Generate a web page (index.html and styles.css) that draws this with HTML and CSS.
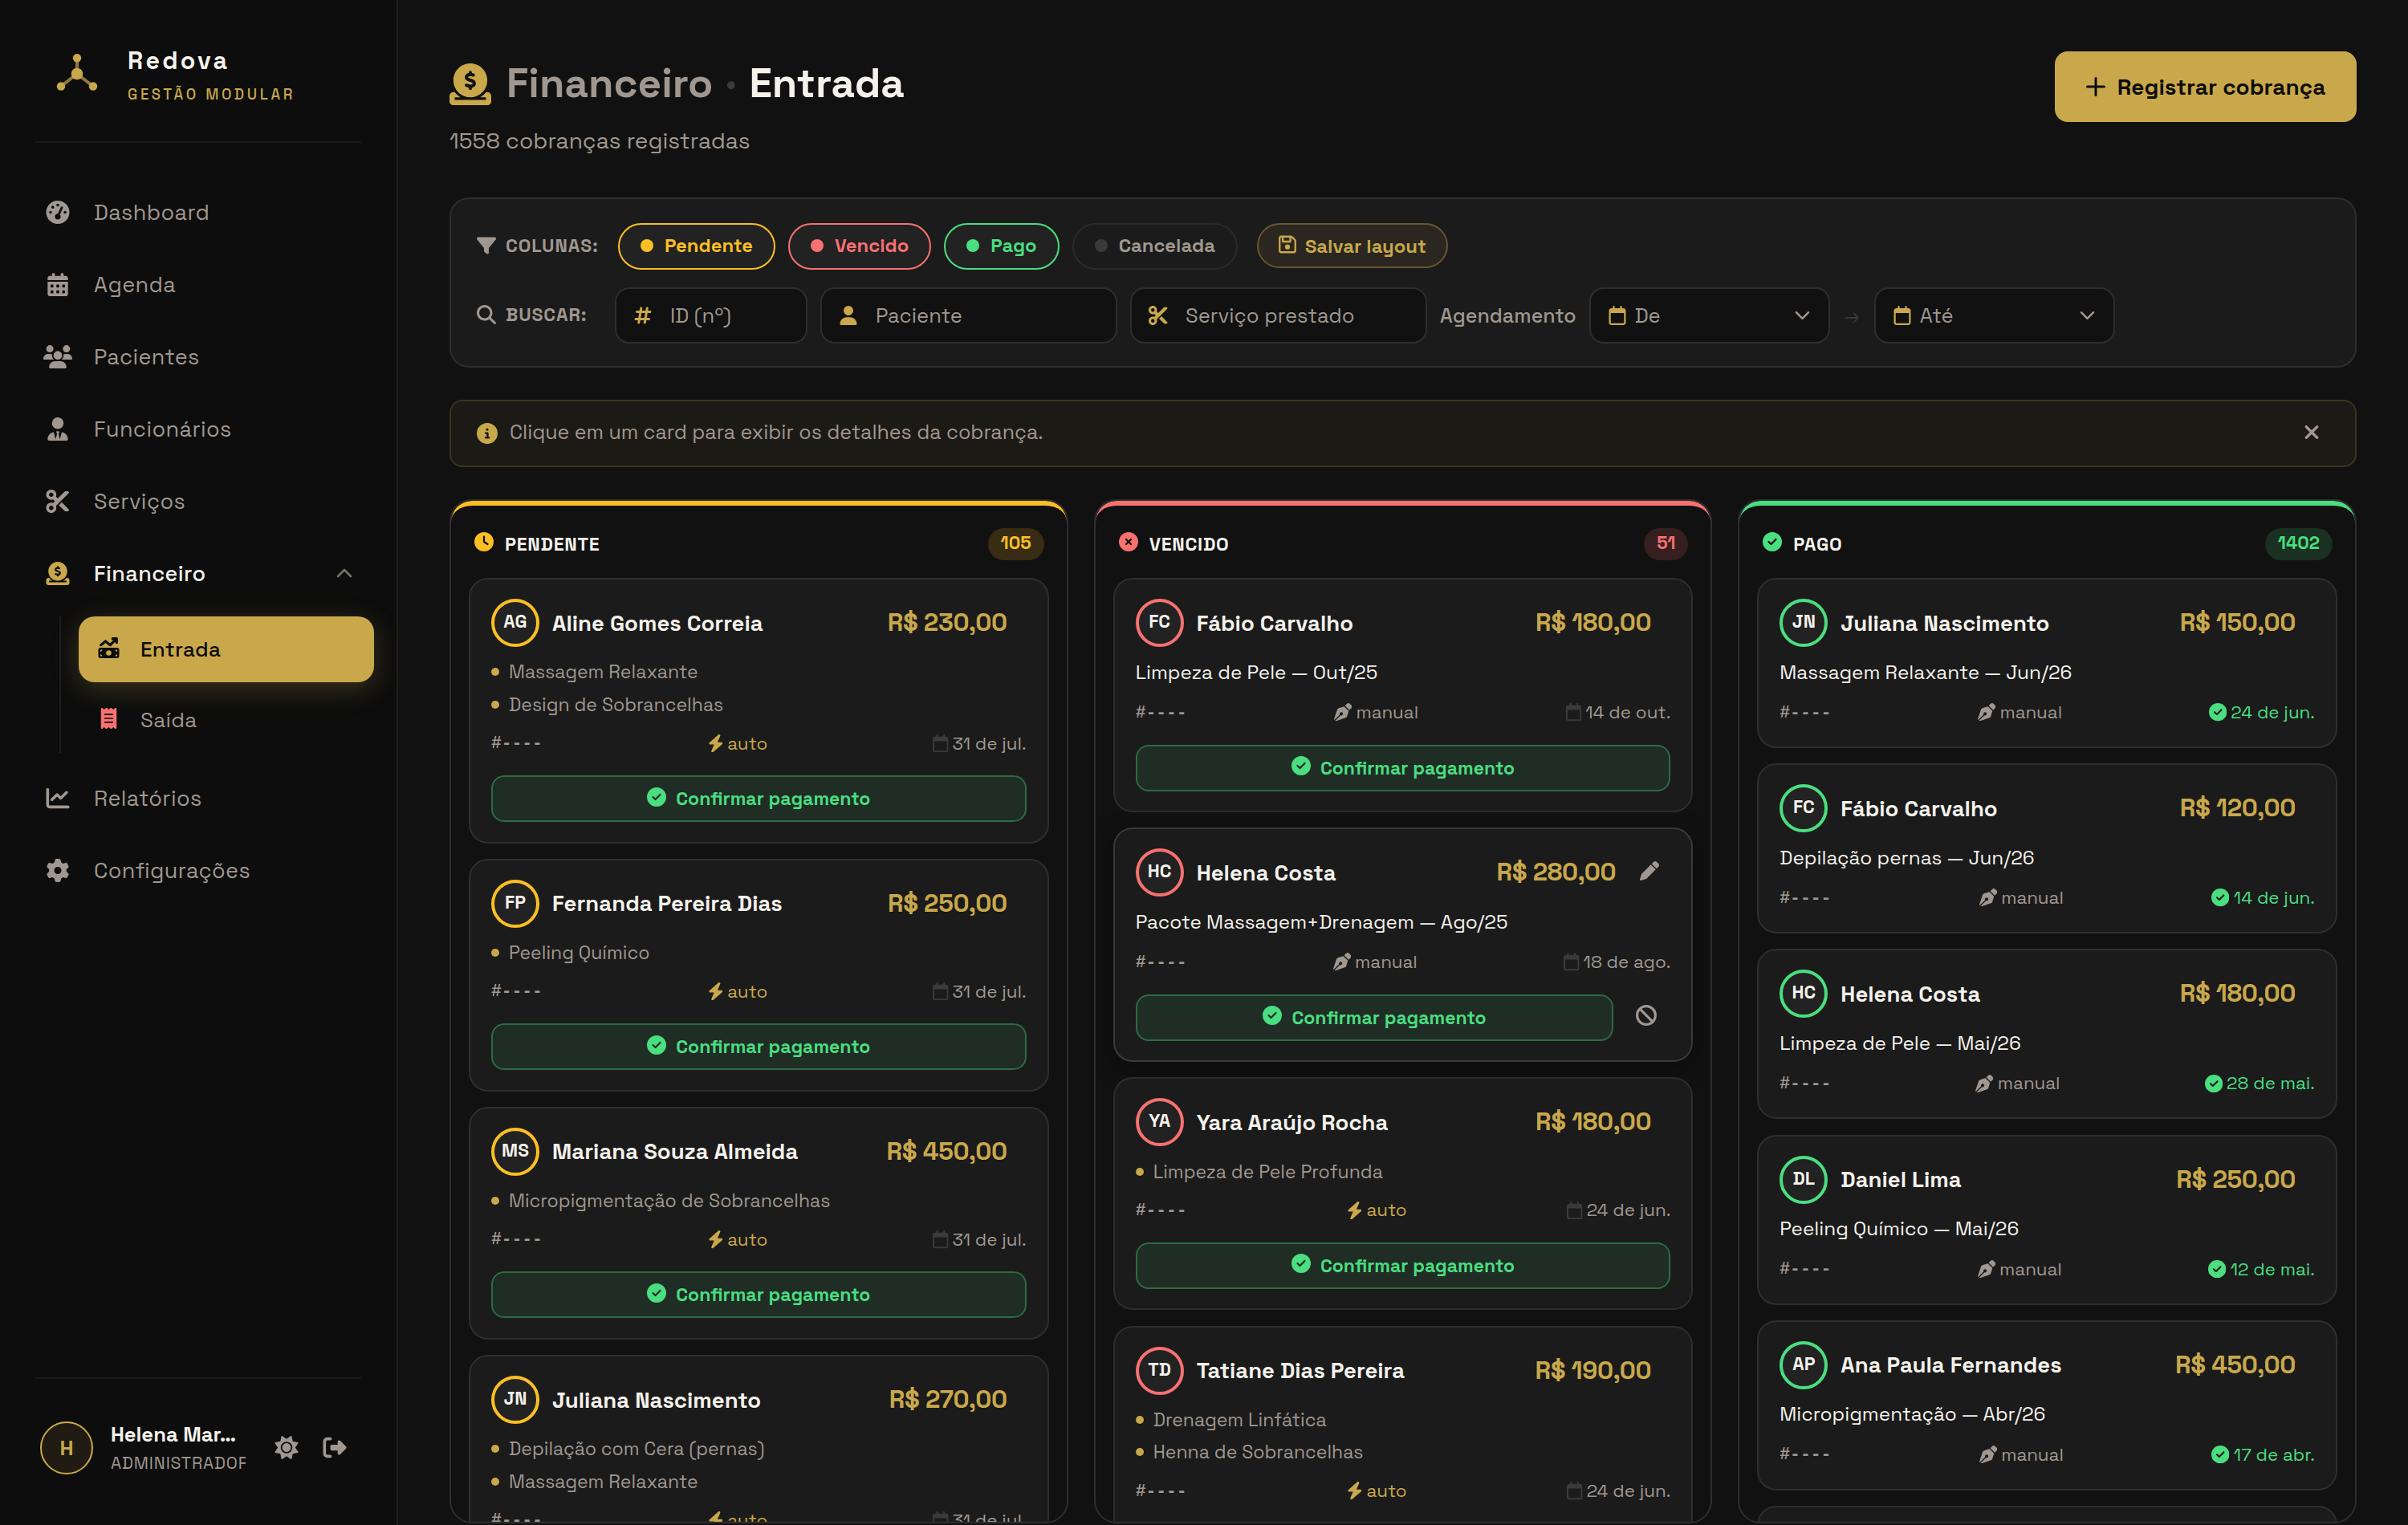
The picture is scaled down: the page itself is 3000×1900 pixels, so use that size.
FILE: index.html
```html
<!DOCTYPE html>
<html lang="pt-br">
<head>
  <meta charset="UTF-8" />
  <meta name="viewport" content="width=device-width, initial-scale=1.0"/>
  <title>Redova - Financeiro</title>
  <link rel="stylesheet" href="styles.css">
</head>
<body>
  <!-- Icons -->
  <svg class="sprite" xmlns="http://www.w3.org/2000/svg">
    <symbol id="i-gauge" viewBox="0 0 512 512"><path d="M0 256a256 256 0 1 1 512 0A256 256 0 1 1 0 256zM288 96a32 32 0 1 0 -64 0 32 32 0 1 0 64 0zM256 416c35.3 0 64-28.7 64-64c0-17.4-6.9-33.1-18.1-44.6L366 161.7c5.3-12.1-.2-26.3-12.3-31.6s-26.3 .2-31.6 12.3L257.9 288c-.6 0-1.3 0-1.9 0c-35.3 0-64 28.7-64 64s28.7 64 64 64zM176 144a32 32 0 1 0 -64 0 32 32 0 1 0 64 0zM96 288a32 32 0 1 0 0-64 32 32 0 1 0 0 64zm352-32a32 32 0 1 0 -64 0 32 32 0 1 0 64 0z"/></symbol>
    <symbol id="i-days" viewBox="0 0 448 512"><path d="M128 0c17.7 0 32 14.3 32 32l0 32 128 0 0-32c0-17.7 14.3-32 32-32s32 14.3 32 32l0 32 48 0c26.5 0 48 21.5 48 48l0 48L0 160l0-48C0 85.5 21.5 64 48 64l48 0 0-32c0-17.7 14.3-32 32-32zM0 192l448 0 0 272c0 26.5-21.5 48-48 48L48 512c-26.5 0-48-21.5-48-48L0 192zm64 80l0 32c0 8.8 7.2 16 16 16l32 0c8.8 0 16-7.2 16-16l0-32c0-8.8-7.2-16-16-16l-32 0c-8.8 0-16 7.2-16 16zm128 0l0 32c0 8.8 7.2 16 16 16l32 0c8.8 0 16-7.2 16-16l0-32c0-8.8-7.2-16-16-16l-32 0c-8.8 0-16 7.2-16 16zm144-16c-8.8 0-16 7.2-16 16l0 32c0 8.8 7.2 16 16 16l32 0c8.8 0 16-7.2 16-16l0-32c0-8.8-7.2-16-16-16l-32 0zM64 400l0 32c0 8.8 7.2 16 16 16l32 0c8.8 0 16-7.2 16-16l0-32c0-8.8-7.2-16-16-16l-32 0c-8.8 0-16 7.2-16 16zm144-16c-8.8 0-16 7.2-16 16l0 32c0 8.8 7.2 16 16 16l32 0c8.8 0 16-7.2 16-16l0-32c0-8.8-7.2-16-16-16l-32 0zm112 16l0 32c0 8.8 7.2 16 16 16l32 0c8.8 0 16-7.2 16-16l0-32c0-8.8-7.2-16-16-16l-32 0c-8.8 0-16 7.2-16 16z"/></symbol>
    <symbol id="i-users" viewBox="0 0 640 512"><path d="M144 0a80 80 0 1 1 0 160A80 80 0 1 1 144 0zM512 0a80 80 0 1 1 0 160A80 80 0 1 1 512 0zM0 298.7C0 239.8 47.8 192 106.7 192l42.7 0c15.9 0 31 3.5 44.6 9.7c-1.3 7.2-1.9 14.7-1.9 22.3c0 38.2 16.8 72.5 43.3 96c-.2 0-.4 0-.7 0L21.3 320C9.6 320 0 310.4 0 298.7zM405.3 320c-.2 0-.4 0-.7 0c26.6-23.5 43.3-57.8 43.3-96c0-7.6-.7-15-1.9-22.3c13.6-6.3 28.7-9.7 44.6-9.7l42.7 0C592.2 192 640 239.8 640 298.7c0 11.8-9.6 21.3-21.3 21.3l-213.3 0zM224 224a96 96 0 1 1 192 0 96 96 0 1 1 -192 0zM128 485.3C128 411.7 187.7 352 261.3 352l117.3 0C452.3 352 512 411.7 512 485.3c0 14.7-11.9 26.7-26.7 26.7l-330.7 0c-14.7 0-26.7-11.9-26.7-26.7z"/></symbol>
    <symbol id="i-tie" viewBox="0 0 448 512"><path d="M96 128a128 128 0 1 0 256 0A128 128 0 1 0 96 128zm94.5 200.2l18.6 31L175.8 483.1l-36-146.9c-2-8.1-9.8-13.4-17.9-11.3C51.9 342.4 0 405.8 0 481.3c0 17 13.8 30.7 30.7 30.7l131.7 0 5.6 0 112 0 5.6 0 131.7 0c17 0 30.7-13.8 30.7-30.7c0-75.5-51.9-138.9-121.9-156.4c-8.1-2-15.9 3.3-17.9 11.3l-36 146.9L238.9 359.2l18.6-31c6.4-10.7-1.3-24.2-13.7-24.2L224 304l-19.7 0c-12.4 0-20.1 13.6-13.7 24.2z"/></symbol>
    <symbol id="i-scissors" viewBox="0 0 512 512"><path d="M256 192l-39.5-39.5c4.9-12.6 7.5-26.2 7.5-40.5C224 50.1 173.9 0 112 0S0 50.1 0 112s50.1 112 112 112c14.3 0 27.9-2.7 40.5-7.5L192 256l-39.5 39.5c-12.6-4.9-26.2-7.5-40.5-7.5C50.1 288 0 338.1 0 400s50.1 112 112 112s112-50.1 112-112c0-14.3-2.7-27.9-7.5-40.5L499.2 76.8c7.1-7.1 7.1-18.5 0-25.6c-28.3-28.3-74.1-28.3-102.4 0L256 192zm22.6 150.6L396.8 460.8c28.3 28.3 74.1 28.3 102.4 0c7.1-7.1 7.1-18.5 0-25.6L342.6 278.6l-64 64zM64 112a48 48 0 1 1 96 0 48 48 0 1 1 -96 0zm48 240a48 48 0 1 1 0 96 48 48 0 1 1 0-96z"/></symbol>
    <symbol id="i-donate" viewBox="0 0 512 512"><path d="M326.7 403.7c-22.1 8-45.9 12.3-70.7 12.3s-48.7-4.4-70.7-12.3l-.8-.3c-30-11-56.8-28.7-78.6-51.4C70 314.6 48 263.9 48 208C48 93.1 141.1 0 256 0S464 93.1 464 208c0 55.9-22 106.6-57.9 144c-1 1-2 2.1-3 3.1c-21.4 21.4-47.4 38.1-76.3 48.6zM256 91.9c-11.1 0-20.1 9-20.1 20.1l0 6c-5.6 1.2-10.9 2.9-15.9 5.1c-15 6.8-27.9 19.4-31.1 37.7c-1.8 10.2-.8 20 3.4 29c4.2 8.8 10.7 15 17.3 19.5c11.6 7.9 26.9 12.5 38.6 16l2.2 .7c13.9 4.2 23.4 7.4 29.3 11.7c2.5 1.8 3.4 3.2 3.7 4c.3 .8 .9 2.6 .2 6.7c-.6 3.5-2.5 6.4-8 8.8c-6.1 2.6-16 3.9-28.8 1.9c-6-1-16.7-4.6-26.2-7.9c-2.2-.7-4.3-1.5-6.4-2.1c-10.5-3.5-21.8 2.2-25.3 12.7s2.2 21.8 12.7 25.3c1.2 .4 2.7 .9 4.4 1.5c7.9 2.7 20.3 6.9 29.8 9.1l0 6.4c0 11.1 9 20.1 20.1 20.1s20.1-9 20.1-20.1l0-5.5c5.3-1 10.5-2.5 15.4-4.6c15.7-6.7 28.4-19.7 31.6-38.7c1.8-10.4 1-20.3-3-29.4c-3.9-9-10.2-15.6-16.9-20.5c-12.2-8.8-28.3-13.7-40.4-17.4l-.8-.2c-14.2-4.3-23.8-7.3-29.9-11.4c-2.6-1.8-3.4-3-3.6-3.5c-.2-.3-.7-1.6-.1-5c.3-1.9 1.9-5.2 8.2-8.1c6.4-2.9 16.4-4.5 28.6-2.6c4.3 .7 17.9 3.3 21.7 4.3c10.7 2.8 21.6-3.5 24.5-14.2s-3.5-21.6-14.2-24.5c-4.4-1.2-14.4-3.2-21-4.4l0-6.3c0-11.1-9-20.1-20.1-20.1zM48 352l16 0c19.5 25.9 44 47.7 72.2 64L64 416l0 32 192 0 192 0 0-32-72.2 0c28.2-16.3 52.8-38.1 72.2-64l16 0c26.5 0 48 21.5 48 48l0 64c0 26.5-21.5 48-48 48L48 512c-26.5 0-48-21.5-48-48l0-64c0-26.5 21.5-48 48-48z"/></symbol>
    <symbol id="i-trend" viewBox="0 0 512 512"><path d="M470.7 9.4c3 3.1 5.3 6.6 6.9 10.3s2.4 7.8 2.4 12.2v96.1c0 17.7-14.3 32-32 32s-32-14.3-32-32V109.3L310.6 214.6c-11.8 11.8-30.8 12.6-43.5 1.7L176 138.1 84.8 216.3c-13.4 11.5-33.6 9.9-45.1-3.5s-9.9-33.6 3.5-45.1l112-96c12-10.3 29.7-10.3 41.7 0l89.5 76.7L370.7 64H352c-17.7 0-32-14.3-32-32s14.3-32 32-32h96c8.8 0 16.8 3.6 22.6 9.3l.1 .1zM0 304c0-26.5 21.5-48 48-48H464c26.5 0 48 21.5 48 48V464c0 26.5-21.5 48-48 48H48c-26.5 0-48-21.5-48-48V304zM48 416v48H96c0-26.5-21.5-48-48-48zM96 304H48v48c26.5 0 48-21.5 48-48zM464 416c-26.5 0-48 21.5-48 48h48V416zM416 304c0 26.5 21.5 48 48 48V304H416zm-96 80a64 64 0 1 0 -128 0 64 64 0 1 0 128 0z"/></symbol>
    <symbol id="i-receipt" viewBox="0 0 384 512"><path d="M14 2.2C22.5-1.7 32.5-.3 39.6 5.8L80 40.4 120.4 5.8c9-7.7 22.3-7.7 31.2 0L192 40.4 232.4 5.8c9-7.7 22.3-7.7 31.2 0L304 40.4 344.4 5.8c7.1-6.1 17.1-7.5 25.6-3.6s14 12.4 14 21.8V488c0 9.4-5.5 17.9-14 21.8s-18.5 2.5-25.6-3.6L304 471.6l-40.4 34.6c-9 7.7-22.3 7.7-31.2 0L192 471.6l-40.4 34.6c-9 7.7-22.3 7.7-31.2 0L80 471.6 39.6 506.2c-7.1 6.1-17.1 7.5-25.6 3.6S0 497.4 0 488V24C0 14.6 5.5 6.1 14 2.2zM96 144c-8.8 0-16 7.2-16 16s7.2 16 16 16H288c8.8 0 16-7.2 16-16s-7.2-16-16-16H96zM80 352c0 8.8 7.2 16 16 16H288c8.8 0 16-7.2 16-16s-7.2-16-16-16H96c-8.8 0-16 7.2-16 16zM96 240c-8.8 0-16 7.2-16 16s7.2 16 16 16H288c8.8 0 16-7.2 16-16s-7.2-16-16-16H96z"/></symbol>
    <symbol id="i-chart" viewBox="0 0 512 512"><path d="M64 64c0-17.7-14.3-32-32-32S0 46.3 0 64V400c0 44.2 35.8 80 80 80H480c17.7 0 32-14.3 32-32s-14.3-32-32-32H80c-8.8 0-16-7.2-16-16V64zm406.6 86.6c12.5-12.5 12.5-32.8 0-45.3s-32.8-12.5-45.3 0L320 210.7l-57.4-57.4c-12.5-12.5-32.8-12.5-45.3 0l-112 112c-12.5 12.5-12.5 32.8 0 45.3s32.8 12.5 45.3 0L240 221.3l57.4 57.4c12.5 12.5 32.8 12.5 45.3 0l128-128z"/></symbol>
    <symbol id="i-gear" viewBox="0 0 512 512"><path d="M495.9 166.6c3.2 8.7 .5 18.4-6.4 24.6l-43.3 39.4c1.1 8.3 1.7 16.8 1.7 25.4s-.6 17.1-1.7 25.4l43.3 39.4c6.9 6.2 9.6 15.9 6.4 24.6c-4.4 11.9-9.7 23.3-15.8 34.3l-4.7 8.1c-6.6 11-14 21.4-22.1 31.2c-5.9 7.2-15.7 9.6-24.5 6.8l-55.7-17.7c-13.4 10.3-28.2 18.9-44 25.4l-12.5 57.1c-2 9.1-9 16.3-18.2 17.8c-13.8 2.3-28 3.5-42.5 3.5s-28.7-1.2-42.5-3.5c-9.2-1.5-16.2-8.7-18.2-17.8l-12.5-57.1c-15.8-6.5-30.6-15.1-44-25.4L83.1 425.9c-8.8 2.8-18.6 .3-24.5-6.8c-8.1-9.8-15.5-20.2-22.1-31.2l-4.7-8.1c-6.1-11-11.4-22.4-15.8-34.3c-3.2-8.7-.5-18.4 6.4-24.6l43.3-39.4C64.6 273.1 64 264.6 64 256s.6-17.1 1.7-25.4L22.4 191.2c-6.9-6.2-9.6-15.9-6.4-24.6c4.4-11.9 9.7-23.3 15.8-34.3l4.7-8.1c6.6-11 14-21.4 22.1-31.2c5.9-7.2 15.7-9.6 24.5-6.8l55.7 17.7c13.4-10.3 28.2-18.9 44-25.4l12.5-57.1c2-9.1 9-16.3 18.2-17.8C227.3 1.2 241.5 0 256 0s28.7 1.2 42.5 3.5c9.2 1.5 16.2 8.7 18.2 17.8l12.5 57.1c15.8 6.5 30.6 15.1 44 25.4l55.7-17.7c8.8-2.8 18.6-.3 24.5 6.8c8.1 9.8 15.5 20.2 22.1 31.2l4.7 8.1c6.1 11 11.4 22.4 15.8 34.3zM256 336a80 80 0 1 0 0-160 80 80 0 1 0 0 160z"/></symbol>
    <symbol id="i-sun" viewBox="0 0 512 512"><path d="M361.5 1.2c5 2.1 8.6 6.6 9.6 11.9L391 121l107.9 19.8c5.3 1 9.8 4.6 11.9 9.6s1.5 10.7-1.6 15.2L446.9 256l62.3 90.3c3.1 4.5 3.7 10.2 1.6 15.2s-6.6 8.6-11.9 9.6L391 391 371.1 498.9c-1 5.3-4.6 9.8-9.6 11.9s-10.7 1.5-15.2-1.6L256 446.9l-90.3 62.3c-4.5 3.1-10.2 3.7-15.2 1.6s-8.6-6.6-9.6-11.9L121 391 13.1 371.1c-5.3-1-9.8-4.6-11.9-9.6s-1.5-10.7 1.6-15.2L65.1 256 2.8 165.7c-3.1-4.5-3.7-10.2-1.6-15.2s6.6-8.6 11.9-9.6L121 121 140.9 13.1c1-5.3 4.6-9.8 9.6-11.9s10.7-1.5 15.2 1.6L256 65.1 346.3 2.8c4.5-3.1 10.2-3.7 15.2-1.6zM160 256a96 96 0 1 1 192 0 96 96 0 1 1 -192 0zm224 0a128 128 0 1 0 -256 0 128 128 0 1 0 256 0z"/></symbol>
    <symbol id="i-logout" viewBox="0 0 512 512"><path d="M377.9 105.9L500.7 228.7c7.2 7.2 11.3 17.1 11.3 27.3s-4.1 20.1-11.3 27.3L377.9 406.1c-6.4 6.4-15 9.9-24 9.9c-18.7 0-33.9-15.2-33.9-33.9l0-62.1-128 0c-17.7 0-32-14.3-32-32l0-64c0-17.7 14.3-32 32-32l128 0 0-62.1c0-18.7 15.2-33.9 33.9-33.9c9 0 17.6 3.6 24 9.9zM160 96L96 96c-17.7 0-32 14.3-32 32l0 256c0 17.7 14.3 32 32 32l64 0c17.7 0 32 14.3 32 32s-14.3 32-32 32l-64 0c-53 0-96-43-96-96L0 128C0 75 43 32 96 32l64 0c17.7 0 32 14.3 32 32s-14.3 32-32 32z"/></symbol>
    <symbol id="i-filter" viewBox="0 0 512 512"><path d="M3.9 54.9C10.5 40.9 24.5 32 40 32l432 0c15.5 0 29.5 8.9 36.1 22.9s4.6 30.5-5.2 42.5L320 320.9 320 448c0 12.1-6.8 23.2-17.7 28.6s-23.8 4.3-33.5-3l-64-48c-8.1-6-12.8-15.5-12.8-25.6l0-79.1L9 97.3C-.7 85.4-2.8 68.8 3.9 54.9z"/></symbol>
    <symbol id="i-search" viewBox="0 0 512 512"><path d="M416 208c0 45.9-14.9 88.3-40 122.7L502.6 457.4c12.5 12.5 12.5 32.8 0 45.3s-32.8 12.5-45.3 0L330.7 376c-34.4 25.2-76.8 40-122.7 40C93.1 416 0 322.9 0 208S93.1 0 208 0S416 93.1 416 208zM208 352a144 144 0 1 0 0-288 144 144 0 1 0 0 288z"/></symbol>
    <symbol id="i-save" viewBox="0 0 448 512"><path d="M48 96V416c0 8.8 7.2 16 16 16H384c8.8 0 16-7.2 16-16V170.5c0-4.2-1.7-8.3-4.7-11.3l33.9-33.9c12 12 18.7 28.3 18.7 45.3V416c0 35.3-28.7 64-64 64H64c-35.3 0-64-28.7-64-64V96C0 60.7 28.7 32 64 32H309.5c17 0 33.3 6.7 45.3 18.7l74.5 74.5-33.9 33.9L320.8 84.7c-.3-.3-.5-.5-.8-.8V184c0 13.3-10.7 24-24 24H104c-13.3 0-24-10.7-24-24V80H64c-8.8 0-16 7.2-16 16zm80-16v80H272V80H128zm32 240a64 64 0 1 1 128 0 64 64 0 1 1 -128 0z"/></symbol>
    <symbol id="i-hash" viewBox="0 0 448 512"><path d="M181.3 32.4c17.4 2.9 29.2 19.4 26.3 36.8L197.8 128l95.1 0 11.5-69.3c2.9-17.4 19.4-29.2 36.8-26.3s29.2 19.4 26.3 36.8L357.8 128l58.2 0c17.7 0 32 14.3 32 32s-14.3 32-32 32l-68.9 0L325.8 320l58.2 0c17.7 0 32 14.3 32 32s-14.3 32-32 32l-68.9 0-11.5 69.3c-2.9 17.4-19.4 29.2-36.8 26.3s-29.2-19.4-26.3-36.8l9.8-58.7-95.1 0-11.5 69.3c-2.9 17.4-19.4 29.2-36.8 26.3s-29.2-19.4-26.3-36.8L90.2 384 32 384c-17.7 0-32-14.3-32-32s14.3-32 32-32l68.9 0 21.3-128L64 192c-17.7 0-32-14.3-32-32s14.3-32 32-32l68.9 0 11.5-69.3c2.9-17.4 19.4-29.2 36.8-26.3zM187.1 192L165.8 320l95.1 0 21.3-128-95.1 0z"/></symbol>
    <symbol id="i-user" viewBox="0 0 448 512"><path d="M224 256A128 128 0 1 0 224 0a128 128 0 1 0 0 256zm-45.7 48C79.8 304 0 383.8 0 482.3C0 498.7 13.3 512 29.7 512l388.6 0c16.4 0 29.7-13.3 29.7-29.7C448 383.8 368.2 304 269.7 304l-91.4 0z"/></symbol>
    <symbol id="i-calendar" viewBox="0 0 448 512"><path d="M152 24c0-13.3-10.7-24-24-24s-24 10.7-24 24l0 40L64 64C28.7 64 0 92.7 0 128l0 320c0 35.3 28.7 64 64 64l320 0c35.3 0 64-28.7 64-64l0-320c0-35.3-28.7-64-64-64l-40 0 0-40c0-13.3-10.7-24-24-24s-24 10.7-24 24l0 40L152 64l0-40zM48 192l352 0 0 256c0 8.8-7.2 16-16 16L64 464c-8.8 0-16-7.2-16-16l0-256z"/></symbol>
    <symbol id="i-info" viewBox="0 0 512 512"><path d="M256 512A256 256 0 1 0 256 0a256 256 0 1 0 0 512zM216 336l24 0 0-64-24 0c-13.3 0-24-10.7-24-24s10.7-24 24-24l48 0c13.3 0 24 10.7 24 24l0 88 8 0c13.3 0 24 10.7 24 24s-10.7 24-24 24l-80 0c-13.3 0-24-10.7-24-24s10.7-24 24-24zm40-208a32 32 0 1 1 0 64 32 32 0 1 1 0-64z"/></symbol>
    <symbol id="i-check" viewBox="0 0 512 512"><path d="M256 512A256 256 0 1 0 256 0a256 256 0 1 0 0 512zM369 209L241 337c-9.4 9.4-24.6 9.4-33.9 0l-64-64c-9.4-9.4-9.4-24.6 0-33.9s24.6-9.4 33.9 0l47 47L335 175c9.4-9.4 24.6-9.4 33.9 0s9.4 24.6 0 33.9z"/></symbol>
    <symbol id="i-cross" viewBox="0 0 512 512"><path d="M256 512A256 256 0 1 0 256 0a256 256 0 1 0 0 512zM175 175c9.4-9.4 24.6-9.4 33.9 0l47 47 47-47c9.4-9.4 24.6-9.4 33.9 0s9.4 24.6 0 33.9l-47 47 47 47c9.4 9.4 9.4 24.6 0 33.9s-24.6 9.4-33.9 0l-47-47-47 47c-9.4 9.4-24.6 9.4-33.9 0s-9.4-24.6 0-33.9l47-47-47-47c-9.4-9.4-9.4-24.6 0-33.9z"/></symbol>
    <symbol id="i-clock" viewBox="0 0 512 512"><path d="M256 0a256 256 0 1 1 0 512A256 256 0 1 1 256 0zM232 120l0 136c0 8 4 15.5 10.7 20l96 64c11 7.4 25.9 4.4 33.3-6.7s4.4-25.9-6.7-33.3L280 243.2 280 120c0-13.3-10.7-24-24-24s-24 10.7-24 24z"/></symbol>
    <symbol id="i-bolt" viewBox="0 0 448 512"><path d="M349.4 44.6c5.9-13.7 1.5-29.7-10.6-38.5s-28.6-8-39.9 1.8l-256 224c-10 8.8-13.6 22.9-8.9 35.3S50.7 288 64 288l111.5 0L98.6 467.4c-5.9 13.7-1.5 29.7 10.6 38.5s28.6 8 39.9-1.8l256-224c10-8.8 13.6-22.9 8.9-35.3s-16.6-20.7-30-20.7l-111.5 0L349.4 44.6z"/></symbol>
    <symbol id="i-nib" viewBox="0 0 512 512"><path d="M368.4 18.3L312.7 74.1 437.9 199.3l55.7-55.7c21.9-21.9 21.9-57.3 0-79.2L447.6 18.3c-21.9-21.9-57.3-21.9-79.2 0zM288 94.6l-9.2 2.8L134.7 140.6c-19.9 6-35.7 21.2-42.3 41L3.8 445.8c-3.8 11.3-1 23.9 7.3 32.4L164.7 324.7c-3-6.3-4.7-13.3-4.7-20.7c0-26.5 21.5-48 48-48s48 21.5 48 48s-21.5 48-48 48c-7.4 0-14.4-1.7-20.7-4.7L33.7 500.9c8.6 8.3 21.1 11.2 32.4 7.3l264.3-88.6c19.7-6.6 35-22.4 41-42.3l43.2-144.1 2.7-9.2L288 94.6z"/></symbol>
    <symbol id="i-pen" viewBox="0 0 512 512"><path d="M362.7 19.3L314.3 67.7 444.3 197.7l48.4-48.4c25-25 25-65.5 0-90.5L453.3 19.3c-25-25-65.5-25-90.5 0zm-71 71L58.6 323.5c-10.4 10.4-18 23.3-22.2 37.4L1 481.2C-1.5 489.7 .8 498.8 7 505s15.3 8.5 23.7 6.1l120.3-35.4c14.1-4.2 27-11.8 37.4-22.2L421.7 220.3 291.7 90.3z"/></symbol>
    <symbol id="i-ban" viewBox="0 0 512 512"><path d="M367.2 412.5L99.5 144.8C77.1 176.1 64 214.5 64 256c0 106 86 192 192 192c41.5 0 79.9-13.1 111.2-35.5zm45.3-45.3C434.9 335.9 448 297.5 448 256c0-106-86-192-192-192c-41.5 0-79.9 13.1-111.2 35.5L412.5 367.2zM0 256a256 256 0 1 1 512 0A256 256 0 1 1 0 256z"/></symbol>
    <symbol id="i-xmark" viewBox="0 0 384 512"><path d="M342.6 150.6c12.5-12.5 12.5-32.8 0-45.3s-32.8-12.5-45.3 0L192 210.7 86.6 105.4c-12.5-12.5-32.8-12.5-45.3 0s-12.5 32.8 0 45.3L146.7 256 41.4 361.4c-12.5 12.5-12.5 32.8 0 45.3s32.8 12.5 45.3 0L192 301.3 297.4 406.6c12.5 12.5 32.8 12.5 45.3 0s12.5-32.8 0-45.3L237.3 256 342.6 150.6z"/></symbol>
    <symbol id="i-chevron" viewBox="0 0 20 12"><path d="M2 2l8 8 8-8" fill="none" stroke="currentColor" stroke-width="2.6" stroke-linecap="round" stroke-linejoin="round"/></symbol>
    <symbol id="i-plus" viewBox="0 0 24 24"><path d="M12 1.5v21M1.5 12h21" fill="none" stroke="currentColor" stroke-width="3" stroke-linecap="round"/></symbol>
  </svg>

  <aside class="sidebar">
    <div class="brand">
      <svg class="brand-logo" viewBox="0 0 52 46">
        <path d="M26 25V5M26 25L6 40.500M26 25L46 40.500" stroke="#907939" stroke-width="4" fill="none"/>
        <circle cx="26" cy="25" r="7.300"/><circle cx="26" cy="5.200" r="5.200"/><circle cx="6" cy="40.500" r="5.200"/><circle cx="46" cy="40.500" r="5.200"/>
      </svg>
      <div class="brand-text">
        <div class="brand-name">Redova</div>
        <div class="brand-sub">GESTÃO MODULAR</div>
      </div>
    </div>

    <nav class="nav">
      <a class="nav-item"><svg class="icon"><use href="#i-gauge"/></svg>Dashboard</a>
      <a class="nav-item"><svg class="icon"><use href="#i-days"/></svg>Agenda</a>
      <a class="nav-item"><svg class="icon wide"><use href="#i-users"/></svg>Pacientes</a>
      <a class="nav-item"><svg class="icon"><use href="#i-tie"/></svg>Funcionários</a>
      <a class="nav-item"><svg class="icon"><use href="#i-scissors"/></svg>Serviços</a>
      <a class="nav-item open"><svg class="icon"><use href="#i-donate"/></svg>Financeiro<svg class="caret"><use href="#i-chevron"/></svg></a>
      <div class="subnav">
        <a class="sub-item active"><svg class="icon"><use href="#i-trend"/></svg>Entrada</a>
        <a class="sub-item"><svg class="icon red"><use href="#i-receipt"/></svg>Saída</a>
      </div>
      <a class="nav-item"><svg class="icon"><use href="#i-chart"/></svg>Relatórios</a>
      <a class="nav-item"><svg class="icon"><use href="#i-gear"/></svg>Configurações</a>
    </nav>

    <div class="profile">
      <div class="profile-avatar">H</div>
      <div class="profile-text">
        <div class="profile-name">Helena Mar…</div>
        <div class="profile-role">ADMINISTRADOR</div>
      </div>
      <svg class="icon"><use href="#i-sun"/></svg>
      <svg class="icon"><use href="#i-logout"/></svg>
    </div>
  </aside>

  <main class="main">
    <header class="page-head">
      <div>
        <h1 class="title"><svg class="title-icon"><use href="#i-donate"/></svg><span class="crumb">Financeiro</span><span class="sep">·</span><span class="current">Entrada</span></h1>
        <p class="subtitle">1558 cobranças registradas</p>
      </div>
      <button class="btn-new"><svg><use href="#i-plus"/></svg>Registrar cobrança</button>
    </header>

    <section class="filters">
      <div class="filter-row">
        <div class="filter-label"><svg><use href="#i-filter"/></svg>COLUNAS:</div>
        <div class="pills">
          <span class="pill yellow">Pendente</span>
          <span class="pill red">Vencido</span>
          <span class="pill green">Pago</span>
          <span class="pill off">Cancelada</span>
          <button class="btn-save"><svg><use href="#i-save"/></svg>Salvar layout</button>
        </div>
      </div>
      <div class="filter-row search">
        <div class="filter-label"><svg><use href="#i-search"/></svg>BUSCAR:</div>
        <div class="field small"><svg><use href="#i-hash"/></svg>ID (nº)</div>
        <div class="field"><svg><use href="#i-user"/></svg>Paciente</div>
        <div class="field"><svg><use href="#i-scissors"/></svg>Serviço prestado</div>
        <span class="field-label">Agendamento</span>
        <div class="field date"><svg><use href="#i-calendar"/></svg>De<svg class="caret"><use href="#i-chevron"/></svg></div>
        <span class="arrow">→</span>
        <div class="field date"><svg><use href="#i-calendar"/></svg>Até<svg class="caret"><use href="#i-chevron"/></svg></div>
      </div>
    </section>

    <div class="hint">
      <svg class="hint-icon"><use href="#i-info"/></svg>
      <span class="hint-text">Clique em um card para exibir os detalhes da cobrança.</span>
      <svg class="hint-close"><use href="#i-xmark"/></svg>
    </div>

    <section class="board">
      <!-- Pendente -->
      <div class="column yellow">
        <div class="column-head"><svg><use href="#i-clock"/></svg><h2>PENDENTE</h2><span class="count">105</span></div>
        <div class="cards">
          <article class="card">
            <div class="card-head"><span class="avatar">AG</span><span class="name">Aline Gomes Correia</span><span class="price">R$ 230,00</span></div>
            <ul class="services"><li>Massagem Relaxante</li><li>Design de Sobrancelhas</li></ul>
            <div class="meta"><span class="code">#----</span><span class="auto"><svg><use href="#i-bolt"/></svg>auto</span><span class="date"><svg><use href="#i-calendar"/></svg>31 de jul.</span></div>
            <div class="actions"><button class="confirm"><svg><use href="#i-check"/></svg>Confirmar pagamento</button></div>
          </article>
          <article class="card">
            <div class="card-head"><span class="avatar">FP</span><span class="name">Fernanda Pereira Dias</span><span class="price">R$ 250,00</span></div>
            <ul class="services"><li>Peeling Químico</li></ul>
            <div class="meta"><span class="code">#----</span><span class="auto"><svg><use href="#i-bolt"/></svg>auto</span><span class="date"><svg><use href="#i-calendar"/></svg>31 de jul.</span></div>
            <div class="actions"><button class="confirm"><svg><use href="#i-check"/></svg>Confirmar pagamento</button></div>
          </article>
          <article class="card">
            <div class="card-head"><span class="avatar">MS</span><span class="name">Mariana Souza Almeida</span><span class="price">R$ 450,00</span></div>
            <ul class="services"><li>Micropigmentação de Sobrancelhas</li></ul>
            <div class="meta"><span class="code">#----</span><span class="auto"><svg><use href="#i-bolt"/></svg>auto</span><span class="date"><svg><use href="#i-calendar"/></svg>31 de jul.</span></div>
            <div class="actions"><button class="confirm"><svg><use href="#i-check"/></svg>Confirmar pagamento</button></div>
          </article>
          <article class="card">
            <div class="card-head"><span class="avatar">JN</span><span class="name">Juliana Nascimento</span><span class="price">R$ 270,00</span></div>
            <ul class="services"><li>Depilação com Cera (pernas)</li><li>Massagem Relaxante</li></ul>
            <div class="meta"><span class="code">#----</span><span class="auto"><svg><use href="#i-bolt"/></svg>auto</span><span class="date"><svg><use href="#i-calendar"/></svg>31 de jul.</span></div>
          </article>
        </div>
      </div>

      <!-- Vencido -->
      <div class="column red">
        <div class="column-head"><svg><use href="#i-cross"/></svg><h2>VENCIDO</h2><span class="count">51</span></div>
        <div class="cards">
          <article class="card">
            <div class="card-head"><span class="avatar">FC</span><span class="name">Fábio Carvalho</span><span class="price">R$ 180,00</span></div>
            <div class="service">Limpeza de Pele — Out/25</div>
            <div class="meta"><span class="code">#----</span><span class="manual"><svg><use href="#i-nib"/></svg>manual</span><span class="date"><svg><use href="#i-calendar"/></svg>14 de out.</span></div>
            <div class="actions"><button class="confirm"><svg><use href="#i-check"/></svg>Confirmar pagamento</button></div>
          </article>
          <article class="card hover">
            <div class="card-head"><span class="avatar">HC</span><span class="name">Helena Costa</span><span class="price">R$ 280,00</span><svg class="edit"><use href="#i-pen"/></svg></div>
            <div class="service">Pacote Massagem+Drenagem — Ago/25</div>
            <div class="meta"><span class="code">#----</span><span class="manual"><svg><use href="#i-nib"/></svg>manual</span><span class="date"><svg><use href="#i-calendar"/></svg>18 de ago.</span></div>
            <div class="actions"><button class="confirm"><svg><use href="#i-check"/></svg>Confirmar pagamento</button><span class="cancel"><svg><use href="#i-ban"/></svg></span></div>
          </article>
          <article class="card">
            <div class="card-head"><span class="avatar">YA</span><span class="name">Yara Araújo Rocha</span><span class="price">R$ 180,00</span></div>
            <ul class="services"><li>Limpeza de Pele Profunda</li></ul>
            <div class="meta"><span class="code">#----</span><span class="auto"><svg><use href="#i-bolt"/></svg>auto</span><span class="date"><svg><use href="#i-calendar"/></svg>24 de jun.</span></div>
            <div class="actions"><button class="confirm"><svg><use href="#i-check"/></svg>Confirmar pagamento</button></div>
          </article>
          <article class="card">
            <div class="card-head"><span class="avatar">TD</span><span class="name">Tatiane Dias Pereira</span><span class="price">R$ 190,00</span></div>
            <ul class="services"><li>Drenagem Linfática</li><li>Henna de Sobrancelhas</li></ul>
            <div class="meta"><span class="code">#----</span><span class="auto"><svg><use href="#i-bolt"/></svg>auto</span><span class="date"><svg><use href="#i-calendar"/></svg>24 de jun.</span></div>
            <div class="actions"><button class="confirm"></button></div>
          </article>
        </div>
      </div>

      <!-- Pago -->
      <div class="column green">
        <div class="column-head"><svg><use href="#i-check"/></svg><h2>PAGO</h2><span class="count">1402</span></div>
        <div class="cards">
          <article class="card">
            <div class="card-head"><span class="avatar">JN</span><span class="name">Juliana Nascimento</span><span class="price">R$ 150,00</span></div>
            <div class="service">Massagem Relaxante — Jun/26</div>
            <div class="meta"><span class="code">#----</span><span class="manual"><svg><use href="#i-nib"/></svg>manual</span><span class="paid"><svg><use href="#i-check"/></svg>24 de jun.</span></div>
          </article>
          <article class="card">
            <div class="card-head"><span class="avatar">FC</span><span class="name">Fábio Carvalho</span><span class="price">R$ 120,00</span></div>
            <div class="service">Depilação pernas — Jun/26</div>
            <div class="meta"><span class="code">#----</span><span class="manual"><svg><use href="#i-nib"/></svg>manual</span><span class="paid"><svg><use href="#i-check"/></svg>14 de jun.</span></div>
          </article>
          <article class="card">
            <div class="card-head"><span class="avatar">HC</span><span class="name">Helena Costa</span><span class="price">R$ 180,00</span></div>
            <div class="service">Limpeza de Pele — Mai/26</div>
            <div class="meta"><span class="code">#----</span><span class="manual"><svg><use href="#i-nib"/></svg>manual</span><span class="paid"><svg><use href="#i-check"/></svg>28 de mai.</span></div>
          </article>
          <article class="card">
            <div class="card-head"><span class="avatar">DL</span><span class="name">Daniel Lima</span><span class="price">R$ 250,00</span></div>
            <div class="service">Peeling Químico — Mai/26</div>
            <div class="meta"><span class="code">#----</span><span class="manual"><svg><use href="#i-nib"/></svg>manual</span><span class="paid"><svg><use href="#i-check"/></svg>12 de mai.</span></div>
          </article>
          <article class="card">
            <div class="card-head"><span class="avatar">AP</span><span class="name">Ana Paula Fernandes</span><span class="price">R$ 450,00</span></div>
            <div class="service">Micropigmentação — Abr/26</div>
            <div class="meta"><span class="code">#----</span><span class="manual"><svg><use href="#i-nib"/></svg>manual</span><span class="paid"><svg><use href="#i-check"/></svg>17 de abr.</span></div>
          </article>
          <article class="card last"></article>
        </div>
      </div>
    </section>
  </main>
</body>
</html>
```

FILE: styles.css
```css
* {
  box-sizing: border-box;
  margin: 0;
  padding: 0;
}
:root {
  --gold: #c9a84c;
  --yellow: #fbbf24;
  --red: #f87171;
  --green: #4ade80;
  --text: #f5f2ec;
  --muted: #a09890;
  --line: #2e2e2e;
  --card: #1b1b1b;
  --bg: #111111;
}
body {
  display: flex;
  height: 1900px;
  overflow: hidden;
  background-color: var(--bg);
  color: var(--text);
  font-family: "Space Grotesk", Inter, sans-serif;
  font-size: 26px;
}
button {
  font-family: inherit;
}
svg {
  fill: currentColor;
  flex-shrink: 0;
}
.sprite {
  position: absolute;
  width: 0;
  height: 0;
}

/* Sidebar */
.sidebar {
  width: 496px;
  flex-shrink: 0;
  display: flex;
  flex-direction: column;
  background-color: #0d0d0d;
  border-right: 2px solid #1e1e1e;
  padding: 0 44px;
}
.brand {
  display: flex;
  align-items: center;
  gap: 37px;
  height: 178px;
  padding: 4px 0 0 26px;
  border-bottom: 2px solid #1a1a1a;
}
.brand-logo {
  width: 52px;
  height: 46px;
  fill: var(--gold);
}
.brand-text {
  margin-top: 12px;
}
.brand-name {
  font-size: 30.400px;
  font-weight: 700;
  line-height: 40px;
  letter-spacing: 3.200px;
}
.brand-sub {
  margin-top: 3px;
  font-size: 18.500px;
  font-weight: 500;
  line-height: 38px;
  letter-spacing: 3.650px;
  color: var(--gold);
}
.nav {
  flex: 1;
  padding-top: 45px;
  margin: 0 -16px;
}
.nav-item {
  display: flex;
  align-items: center;
  gap: 28px;
  height: 82px;
  margin-bottom: 8px;
  padding: 0 27px;
  font-size: 27px;
  letter-spacing: 0.400px;
  color: var(--muted);
}
.icon {
  width: 34px;
  height: 29px;
}
.icon.wide {
  width: 36px;
  margin: 0 -1px;
}
.nav-item.open {
  margin-bottom: 0;
  color: var(--text);
  font-weight: 500;
}
.nav-item.open .icon {
  color: var(--gold);
}
.nav-item .caret {
  width: 20px;
  height: 12px;
  margin-left: auto;
  color: #77716b;
  transform: rotate(180deg);
}
.subnav {
  margin: 13px 0 15px 46px;
  padding-left: 22px;
  border-left: 2px solid #1e1e1e;
  display: flex;
  flex-direction: column;
  gap: 6px;
}
.sub-item {
  display: flex;
  align-items: center;
  gap: 23px;
  height: 82px;
  padding-left: 21px;
  border-radius: 20px;
  font-size: 26px;
  letter-spacing: 0.300px;
  color: var(--muted);
}
.sub-item .icon {
  height: 26px;
  width: 33px;
  margin-top: -4px;
}
.sub-item.active {
  width: 368px;
  background-color: var(--gold);
  color: #0d0d0d;
  font-weight: 500;
  box-shadow: 0 8px 32px rgba(201, 168, 76, 0.25);
}
.icon.red {
  color: var(--red);
}
.profile {
  display: flex;
  align-items: center;
  height: 184px;
  padding: 0 16px 10px 6px;
  border-top: 2px solid #1a1a1a;
  color: var(--muted);
}
.profile .icon {
  width: 30px;
  height: 29px;
  margin-top: -2px;
}
.profile .icon + .icon {
  margin-left: 30px;
}
.profile-avatar {
  width: 66px;
  height: 66px;
  flex-shrink: 0;
  display: flex;
  align-items: center;
  justify-content: center;
  border: 2px solid var(--gold);
  border-radius: 50%;
  background-color: #201c13;
  color: var(--gold);
  font-size: 26px;
  font-weight: 700;
}
.profile-text {
  width: 168px;
  margin: 0 36px 0 22px;
  overflow: hidden;
  white-space: nowrap;
}
.profile-name {
  font-size: 25.600px;
  font-weight: 600;
  line-height: 36px;
  color: var(--text);
}
.profile-role {
  font-size: 21px;
  line-height: 35px;
  letter-spacing: 0.850px;
}

/* Header */
.main {
  flex: 1;
  min-width: 0;
  padding: 64px 64px 0;
}
.page-head {
  display: flex;
  justify-content: space-between;
  align-items: flex-start;
  height: 182px;
}
.title {
  display: flex;
  align-items: center;
  height: 82px;
  font-size: 51.200px;
  font-weight: 700;
}
.title span {
  margin-top: -3px;
}
.title-icon {
  width: 52px;
  height: 52px;
  margin-right: 19px;
  color: var(--gold);
}
.crumb {
  color: var(--muted);
  font-weight: 600;
}
.sep {
  width: 45px;
  text-align: center;
  color: #3a3a3a;
}
.subtitle {
  margin-top: 9px;
  font-size: 28.100px;
  line-height: 40px;
  color: var(--muted);
}
.btn-new {
  display: flex;
  align-items: center;
  justify-content: center;
  gap: 15px;
  width: 376px;
  height: 88px;
  border: none;
  border-radius: 16px;
  background-color: var(--gold);
  color: #0d0d0d;
  font-size: 28px;
  font-weight: 600;
}
.btn-new svg {
  width: 24px;
  height: 24px;
}

/* Filters */
.filters {
  height: 212px;
  padding: 30px 32px;
  border: 2px solid var(--line);
  border-radius: 24px;
  background-color: var(--card);
}
.filter-row {
  display: flex;
  align-items: center;
}
.filter-row.search {
  gap: 16px;
  margin-top: 22px;
}
.filter-label {
  display: flex;
  align-items: center;
  gap: 12px;
  width: 176px;
  padding-bottom: 2px;
  font-size: 23px;
  font-weight: 600;
  letter-spacing: 0.900px;
  color: var(--muted);
}
.search .filter-label {
  width: 156px;
}
.filter-label svg {
  width: 24px;
  height: 24px;
}
.pills {
  display: flex;
  gap: 16px;
}
.pill {
  display: flex;
  align-items: center;
  gap: 14px;
  height: 58px;
  padding: 0 26px 2px;
  border: 2px solid currentColor;
  border-radius: 29px;
  background-color: #222222;
  font-size: 23.800px;
  font-weight: 600;
}
.pill::before {
  content: "";
  width: 16px;
  height: 16px;
  border-radius: 50%;
  background-color: currentColor;
}
.pill.yellow { color: var(--yellow); }
.pill.red { color: var(--red); }
.pill.green { color: var(--green); }
.pill.off {
  border-color: #2a2a2a;
  background: none;
  color: var(--muted);
}
.pill.off::before {
  background-color: #3a3a3a;
}
.btn-save {
  display: flex;
  align-items: center;
  gap: 11px;
  height: 56px;
  margin-left: 8px;
  padding: 1px 25px 0;
  border: 2px solid #65562d;
  border-radius: 28px;
  background-color: #2b2720;
  color: var(--gold);
  font-size: 23.800px;
  font-weight: 600;
}
.btn-save svg {
  width: 22px;
  height: 25px;
  margin-top: -4px;
}
.field {
  display: flex;
  align-items: center;
  width: 370px;
  height: 70px;
  padding: 0 22px 0 21px;
  border: 2px solid var(--line);
  border-radius: 18px;
  background-color: var(--bg);
  color: var(--muted);
  font-size: 25.600px;
}
.field.small {
  width: 240px;
}
.field svg {
  width: 24px;
  height: 24px;
  margin-right: 22px;
  color: var(--gold);
}
.field.date {
  width: 300px;
  padding: 0 23px 0 21px;
}
.field.date svg {
  margin-right: 10px;
}
.field.date .caret {
  width: 19px;
  height: 12px;
  margin: 0 0 0 auto;
  color: var(--muted);
}
.field-label {
  font-size: 25px;
  font-weight: 500;
  color: var(--muted);
}
.arrow {
  width: 23px;
  color: #3a3a3a;
  font-size: 24px;
  text-align: center;
}

/* Hint */
.hint {
  display: flex;
  align-items: center;
  height: 84px;
  margin: 40px 0;
  padding: 0 32px;
  border: 2px solid #3a3320;
  border-radius: 16px;
  background-color: #1c1a15;
  color: var(--muted);
  font-size: 24.960px;
}
.hint-icon {
  width: 26px;
  height: 26px;
  margin-right: 15px;
  color: var(--gold);
}
.hint-text {
  margin-top: -5px;
}
.hint-close {
  width: 22px;
  height: 27px;
  margin: -3px 11px 0 auto;
}

/* Board */
.board {
  display: grid;
  grid-template-columns: repeat(3, 1fr);
  gap: 32px;
}
.column {
  height: 1276px;
  overflow: hidden;
  border: 2px solid var(--line);
  border-radius: 28px;
}
.column.yellow { --accent: var(--yellow); --soft: #382c14; }
.column.red { --accent: var(--red); --soft: #371f1f; }
.column.green { --accent: var(--green); --soft: #1a3022; }
.column-head {
  display: flex;
  align-items: center;
  height: 96px;
  padding: 4px 28px 0 29px;
  border-top: 6px solid var(--accent);
  border-radius: 26px 26px 0 0;
}
.column-head svg {
  width: 24px;
  height: 24px;
  margin: -5px 14px 0 0;
  color: var(--accent);
}
.column-head h2 {
  flex: 1;
  margin-top: 2px;
  font-size: 23.200px;
  font-weight: 700;
  letter-spacing: 0.700px;
}
.count {
  height: 40px;
  margin-top: 1px;
  padding: 0 16px;
  border-radius: 20px;
  background-color: var(--soft);
  color: var(--accent);
  font-size: 22.400px;
  font-weight: 700;
  line-height: 38px;
}
.cards {
  display: flex;
  flex-direction: column;
  gap: 19.200px;
  padding: 0 22px;
}
.card {
  padding: 24px 26px 24.500px;
  border: 2px solid var(--line);
  border-radius: 24px;
  background-color: var(--card);
}
.card.hover {
  border-color: #3a3a3a;
  box-shadow: 0 8px 32px rgba(0, 0, 0, 0.3);
}
.card.last {
  height: 100px;
}
.card-head {
  display: flex;
  align-items: center;
  height: 60px;
}
.avatar {
  width: 60px;
  height: 60px;
  display: flex;
  align-items: center;
  justify-content: center;
  padding-bottom: 3px;
  border: 4px solid var(--accent);
  border-radius: 50%;
  background-color: #222222;
  font-size: 22.800px;
  font-weight: 700;
}
.name {
  flex: 1;
  margin-left: 16px;
  font-size: 27.520px;
  font-weight: 700;
}
.price {
  margin: -2px 24px 0 0;
  color: var(--gold);
  font-size: 31px;
  font-weight: 700;
  letter-spacing: -0.350px;
}
.card.hover .price {
  margin-right: 30px;
}
.edit {
  width: 24px;
  height: 24px;
  margin: -4px 14px 0 0;
  color: var(--muted);
}
.services {
  margin: 11px 0 10px;
  list-style: none;
  color: var(--muted);
  font-size: 23.040px;
}
.services li {
  display: flex;
  align-items: center;
  gap: 12px;
  height: 40.500px;
}
.services li::before {
  content: "";
  width: 10px;
  height: 10px;
  border-radius: 50%;
  background-color: var(--gold);
}
.service {
  margin: 10.500px 0 12px;
  font-size: 24.320px;
  line-height: 41px;
}
.meta {
  display: flex;
  align-items: center;
  justify-content: space-between;
  height: 36px;
  color: var(--muted);
  font-size: 22.400px;
}
.meta span {
  display: flex;
  align-items: center;
  gap: 5px;
}
.meta svg {
  width: 19.600px;
  height: 22.400px;
}
.meta .code {
  font-family: "Liberation Mono", monospace;
  font-size: 21.300px;
  font-weight: 700;
}
.meta .auto {
  color: var(--gold);
}
.meta .date svg {
  color: #3a3a3a;
}
.meta .paid {
  color: var(--green);
}
.meta .manual svg,
.meta .paid svg {
  width: 22.400px;
}
.actions {
  display: flex;
  gap: 10px;
  margin-top: 22px;
}
.confirm {
  flex: 1;
  height: 58px;
  display: flex;
  align-items: center;
  justify-content: center;
  gap: 12px;
  border: 2px solid #2c6b43;
  border-radius: 16px;
  background-color: #1f2d25;
  color: var(--green);
  font-size: 23.040px;
  font-weight: 700;
}
.confirm svg {
  width: 24px;
  height: 24px;
  margin-top: -5px;
}
.cancel {
  width: 61px;
  display: flex;
  align-items: center;
  justify-content: center;
  color: var(--muted);
}
.cancel svg {
  width: 26px;
  height: 26px;
  margin-top: -5px;
}
```
